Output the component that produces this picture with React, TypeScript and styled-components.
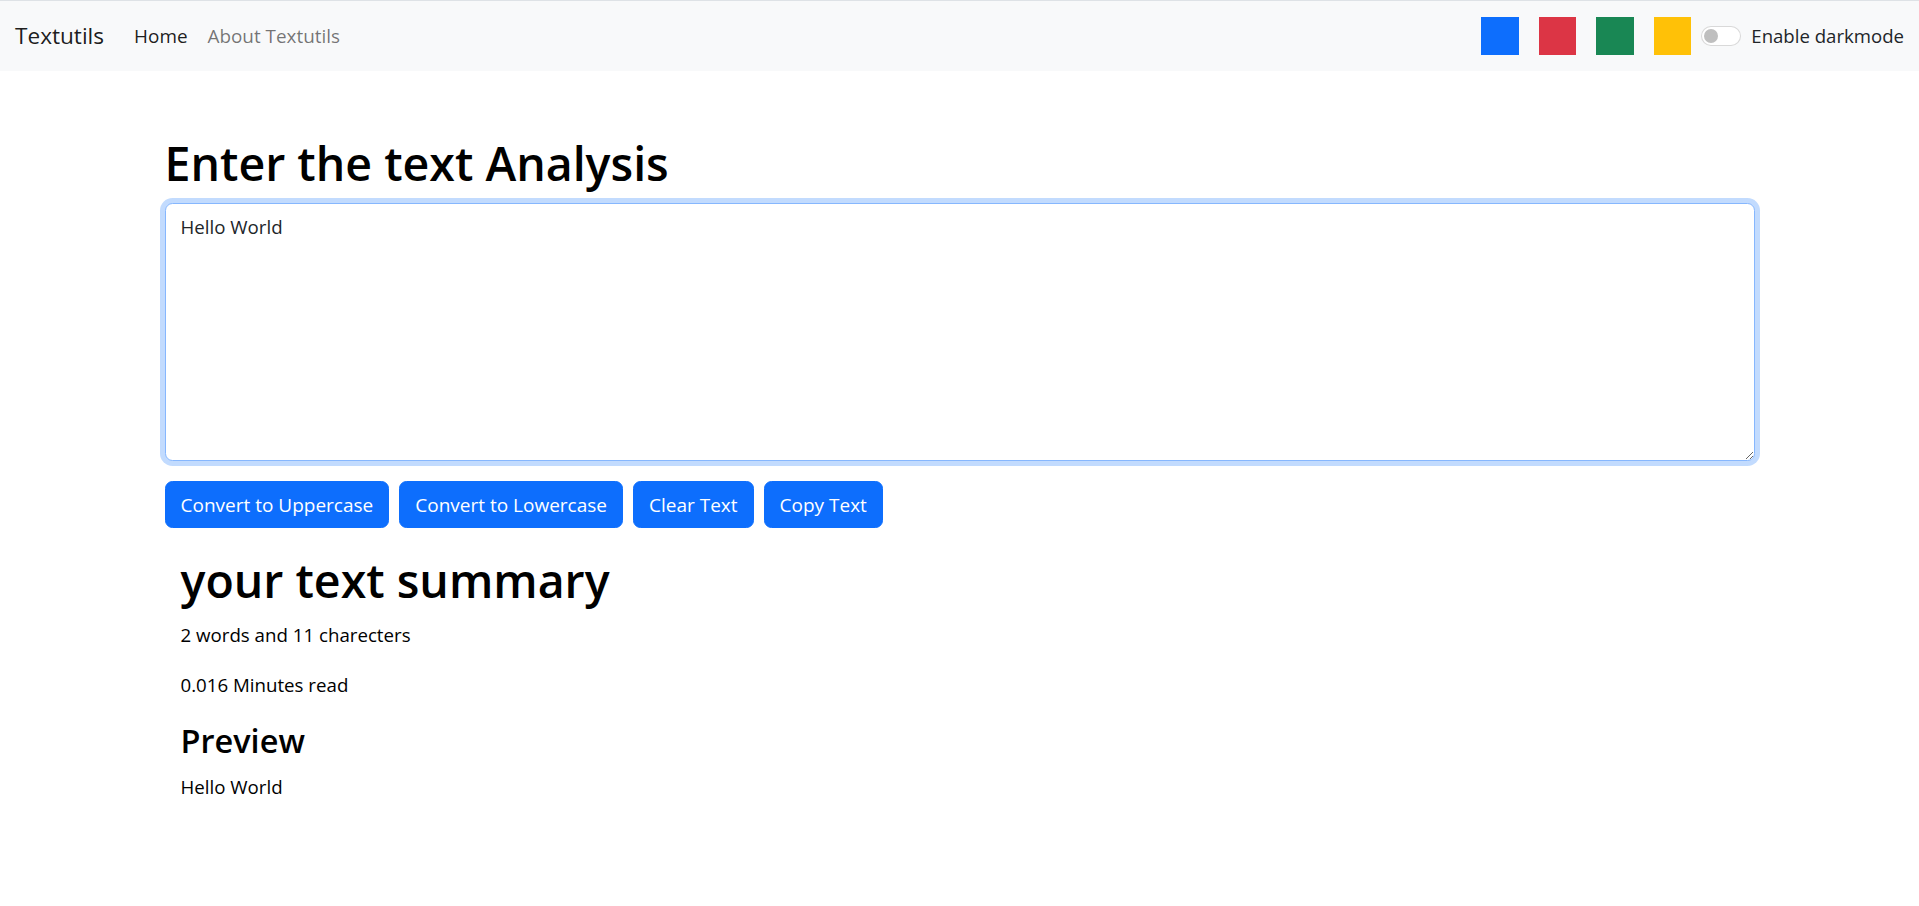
import React, { useEffect, useRef, useState } from "react";
import styled, { createGlobalStyle } from "styled-components";

const Global = createGlobalStyle`
  * { box-sizing: border-box; }
  html, body { margin: 0; padding: 0; background: #fff; }
  body {
    font-family: "Open Sans", "Noto Sans", sans-serif;
    color: #212529;
    font-size: 18.7px;
    line-height: 30px;
  }
`;

const Navbar = styled.nav`
  display: flex;
  align-items: center;
  justify-content: space-between;
  height: 71px;
  padding: 0 15px;
  background: #f8f9fa;
  border-top: 1px solid #dee2e6;
`;

const Left = styled.div`
  display: flex;
  align-items: center;
`;

const Brand = styled.a`
  font-size: 22.6px;
  line-height: 40px;
  color: rgba(0, 0, 0, 0.9);
  text-decoration: none;
  margin-right: 20px;
`;

const NavLink = styled.a<{ $active?: boolean }>`
  font-size: 18.9px;
  line-height: 30px;
  padding: 0 10px;
  text-decoration: none;
  color: ${(p) => (p.$active ? "rgba(0,0,0,0.9)" : "rgba(0,0,0,0.55)")};
`;

const Right = styled.div`
  display: flex;
  align-items: center;
`;

const Swatch = styled.div<{ $color: string }>`
  width: 37.5px;
  height: 37.5px;
  margin: 0 10px;
  background: ${(p) => p.$color};
`;

const Switch = styled.span`
  position: relative;
  display: inline-block;
  width: 40px;
  height: 20px;
  border: 1px solid rgba(0, 0, 0, 0.15);
  border-radius: 10px;
  background: #fff;
  margin-right: 10px;
  &::after {
    content: "";
    position: absolute;
    left: 2px;
    top: 2px;
    width: 14px;
    height: 14px;
    border-radius: 50%;
    background: #bfbfbf;
  }
`;

const SwitchLabel = styled.label`
  font-size: 18.6px;
  line-height: 30px;
  color: #212529;
`;

const Main = styled.main`
  width: 1590px;
  margin: 0 auto;
  padding-top: 62px;
`;

const Title = styled.h1`
  margin: 0 0 10px;
  font-size: 46.5px;
  line-height: 60px;
  font-weight: 600;
  color: #000;
`;

const TextArea = styled.textarea`
  display: block;
  width: 100%;
  height: 258px;
  padding: 7.5px 15px;
  font-family: inherit;
  font-size: 18.7px;
  line-height: 30px;
  color: #212529;
  border: 1px solid #86b7fe;
  border-radius: 7.5px;
  box-shadow: 0 0 0 5px rgba(13, 110, 253, 0.25);
  outline: none;
  margin-bottom: 20px;
  caret-color: #000;
`;

const ButtonRow = styled.div`
  display: flex;
  gap: 10px;
`;

const Button = styled.button`
  font-family: inherit;
  font-size: 19px;
  line-height: 30px;
  padding: 7.5px 15px;
  border: 1px solid #0d6efd;
  border-radius: 7.5px;
  background: #0d6efd;
  color: #fff;
  cursor: pointer;
`;

const Summary = styled.section`
  padding: 22px 16px 0;
`;

const SummaryTitle = styled.h1`
  margin: 0 0 10px;
  font-size: 46.5px;
  line-height: 60px;
  font-weight: 600;
  color: #000;
`;

const Para = styled.p`
  margin: 0 0 20px;
  font-size: 18.7px;
  line-height: 30px;
  color: #000;
`;

const SubTitle = styled.h3`
  margin: 0 0 10px;
  font-size: 32.5px;
  line-height: 42px;
  font-weight: 600;
  color: #000;
`;

export default function App() {
  const [text, setText] = useState("Hello World");
  const ref = useRef<HTMLTextAreaElement>(null);

  useEffect(() => {
    const el = ref.current;
    if (el) {
      el.focus();
      el.setSelectionRange(el.value.length, el.value.length);
    }
  }, []);

  const words = text.split(/\s+/).filter((w) => w.length > 0).length;

  return (
    <>
      <Global />
      <Navbar>
        <Left>
          <Brand href="#">Textutils</Brand>
          <NavLink href="#" $active>
            Home
          </NavLink>
          <NavLink href="#">About Textutils</NavLink>
        </Left>
        <Right>
          <Swatch $color="#0d6efd" />
          <Swatch $color="#dc3545" />
          <Swatch $color="#198754" />
          <Swatch $color="#ffc107" />
          <Switch />
          <SwitchLabel>Enable darkmode</SwitchLabel>
        </Right>
      </Navbar>
      <Main>
        <Title>Enter the text Analysis</Title>
        <TextArea ref={ref} value={text} onChange={(e) => setText(e.target.value)} />
        <ButtonRow>
          <Button onClick={() => setText(text.toUpperCase())}>Convert to Uppercase</Button>
          <Button onClick={() => setText(text.toLowerCase())}>Convert to Lowercase</Button>
          <Button onClick={() => setText("")}>Clear Text</Button>
          <Button onClick={() => navigator.clipboard?.writeText(text)}>Copy Text</Button>
        </ButtonRow>
        <Summary>
          <SummaryTitle>your text summary</SummaryTitle>
          <Para>
            {words} words and {text.length} charecters
          </Para>
          <Para>{(0.008 * words).toFixed(3)} Minutes read</Para>
          <SubTitle>Preview</SubTitle>
          <Para>{text}</Para>
        </Summary>
      </Main>
    </>
  );
}
